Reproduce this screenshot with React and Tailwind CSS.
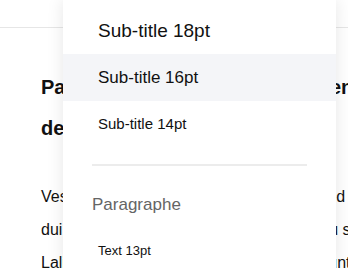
import React from 'react';

const items = [
  { label: 'Sub-title 18pt', size: 'text-[19px]', h: 'h-[46px]' },
  { label: 'Sub-title 16pt', size: 'text-[17px]', h: 'h-[47px]', active: true },
  { label: 'Sub-title 14pt', size: 'text-[15px]', h: 'h-[47px]' },
];

export default function App() {
  return (
    <div className="relative w-[348px] h-[268px] overflow-hidden bg-white font-['Liberation_Sans',Arial,sans-serif] text-[#111]">
      {/* page behind the menu */}
      <div className="h-[28px] border-b border-[#e6e6e6]" />
      <div className="pl-[41px] pt-[39px]">
        <h2 className="text-[20px] font-bold leading-[41px] whitespace-nowrap">Paragraphe de démonstration en</h2>
        <h2 className="text-[20px] font-bold leading-[41px] whitespace-nowrap">deux lignes</h2>
        <div className="mt-[31px] text-[16px] leading-[33px] whitespace-nowrap">
          <p>Vestibulum ante ipsum primis in augue sed</p>
          <p>dui nec tempor facilisis, nisl eros quam eu sapien</p>
          <p>Lalique et dolore magna aliqua veniam sunt</p>
        </div>
      </div>

      {/* dropdown menu */}
      <div className="absolute left-[63px] top-0 bottom-0 w-[273px] pt-[8px] bg-white shadow-[0_0_16px_rgba(0,0,0,0.1)]">
        {items.map((it) => (
          <div
            key={it.label}
            className={`${it.h} flex items-center pl-[35px] ${it.size} ${it.active ? 'bg-[#f4f5f8]' : ''}`}
          >
            {it.label}
          </div>
        ))}
        <div className="mx-[29px] my-[16px] border-t-2 border-[#ececec]" />
        <div className="h-[46px] flex items-center pl-[29px] text-[17px] text-[#656565]">
          Paragraphe
        </div>
        <div className="h-[46px] flex items-center pl-[35px] text-[13px]">Text 13pt</div>
      </div>
    </div>
  );
}
